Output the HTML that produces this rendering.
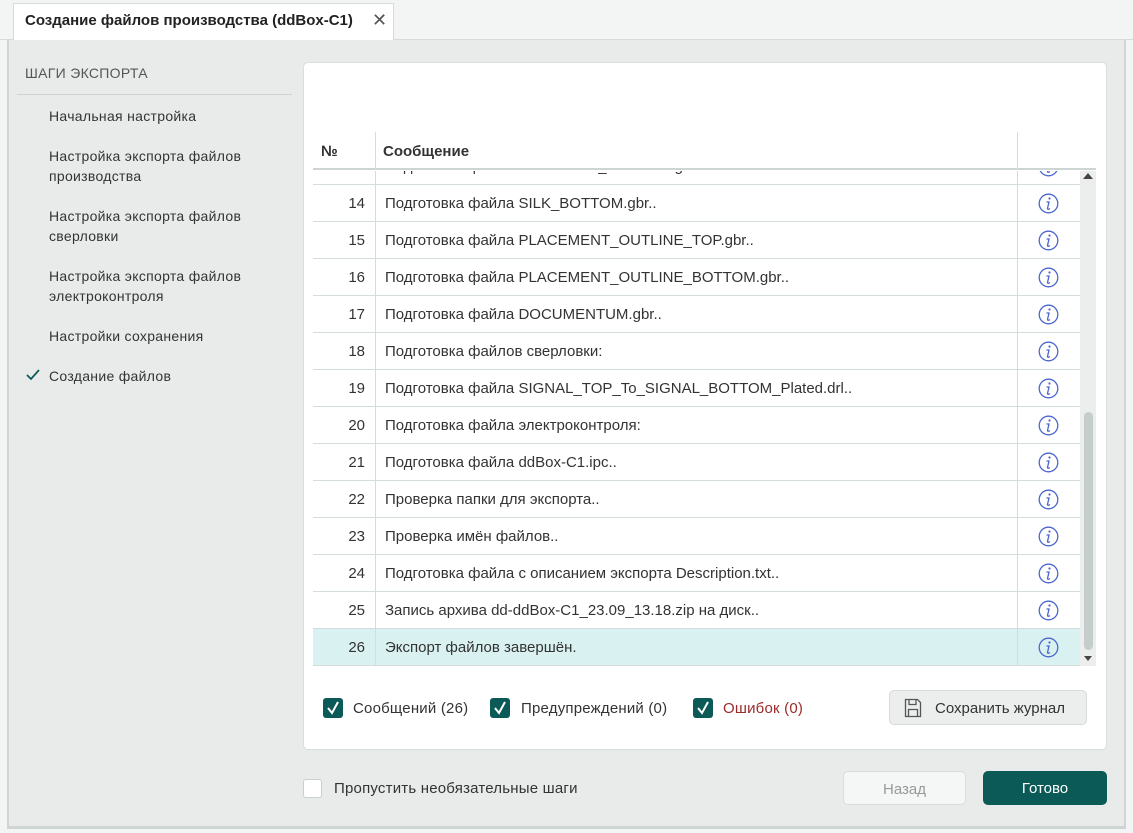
<!DOCTYPE html>
<html><head><meta charset="utf-8"><style>
*{box-sizing:border-box;margin:0;padding:0}
body{width:1133px;height:833px;background:#f3f4f4;font-family:"Liberation Sans",sans-serif;position:relative;overflow:hidden;color:#222}
.abs{position:absolute}
.tabbar{left:0;top:0;width:1133px;height:40px;background:#f3f4f4;border-bottom:1px solid #d5dada}
.tab{left:13px;top:3px;width:381px;height:38px;background:#fff;border:1px solid #d5dada;border-bottom:none;font-weight:bold;font-size:15px;padding:8px 0 0 11px;color:#222}
.main{left:7px;top:40px;width:1119px;height:789px;background:#e9ebea;border-left:2px solid #cfd5d5;border-right:2px solid #cfd5d5;border-bottom:3px solid #cfd5d5}
.step{left:49px;font-size:14px;letter-spacing:0.3px;color:#333;line-height:20px}
.card{left:303px;top:62px;width:804px;height:688px;background:#fff;border:1px solid #d8dddd;border-radius:5px}
.cb{width:20px;height:20px;background:#0b5a57;border-radius:3px}
.lbl{font-size:15px;letter-spacing:0.2px;color:#333}
</style></head><body>
<div class="abs tabbar"></div>
<div class="abs tab">Создание файлов производства (ddBox-C1)<span style="position:absolute;left:358px;top:6px;font-weight:normal;font-size:18px;color:#555">✕</span></div>
<div class="abs main"></div>
<div class="abs" style="left:25px;top:65px;font-size:14px;letter-spacing:0.3px;color:#555">ШАГИ ЭКСПОРТА</div>
<div class="abs" style="left:17px;top:94px;width:275px;height:1px;background:#cdd3d3"></div>
<div class="abs step" style="top:106px">Начальная настройка</div>
<div class="abs step" style="top:146px">Настройка экспорта файлов<br>производства</div>
<div class="abs step" style="top:206px">Настройка экспорта файлов<br>сверловки</div>
<div class="abs step" style="top:266px">Настройка экспорта файлов<br>электроконтроля</div>
<div class="abs step" style="top:326px">Настройки сохранения</div>
<div class="abs step" style="top:366px">Создание файлов</div>
<svg class="abs" style="left:26px;top:369px" width="14" height="12"><path d="M1 6l4 4 8-9" fill="none" stroke="#0b5a57" stroke-width="1.8"/></svg>
<div class="abs card"></div>
<div class="abs" style="left:313px;top:132px;width:783px;height:38px;border-bottom:2px solid #cdd4d4;font-size:15px;font-weight:bold;color:#333">
<span style="position:absolute;left:8px;top:11px">№</span>
<div style="position:absolute;left:62px;top:0;height:38px;border-left:1px solid #d5dcdc"></div>
<span style="position:absolute;left:70px;top:11px">Сообщение</span>
<div style="position:absolute;left:704px;top:0;height:38px;border-left:1px solid #d5dcdc"></div>
</div>
<div class="abs" style="left:313px;top:171px;width:783px;height:495px;overflow:hidden">
<div style="position:relative;top:-23px">
<!--ROWS-->
</div></div>
<div class="abs" style="left:1080px;top:171px;width:16px;height:495px;background:#eceeed"></div>
<div class="abs" style="left:1084px;top:412px;width:9px;height:238px;background:#c4cccc;border-radius:5px"></div>
<div class="abs" style="left:1083px;top:173px;width:0;height:0;border-left:5px solid transparent;border-right:5px solid transparent;border-bottom:6px solid #444"></div>
<div class="abs" style="left:1084px;top:656px;width:0;height:0;border-left:4px solid transparent;border-right:4px solid transparent;border-top:5px solid #444"></div>
<div class="abs cb" style="left:323px;top:698px"></div>
<div class="abs cb" style="left:490px;top:698px"></div>
<div class="abs cb" style="left:693px;top:698px"></div>
<svg class="abs" style="left:323px;top:698px" width="20" height="20"><path d="M5 10l4 5 6-11" fill="none" stroke="#fff" stroke-width="2"/></svg>
<svg class="abs" style="left:490px;top:698px" width="20" height="20"><path d="M5 10l4 5 6-11" fill="none" stroke="#fff" stroke-width="2"/></svg>
<svg class="abs" style="left:693px;top:698px" width="20" height="20"><path d="M5 10l4 5 6-11" fill="none" stroke="#fff" stroke-width="2"/></svg>
<div class="abs lbl" style="left:353px;top:700px">Сообщений (26)</div>
<div class="abs lbl" style="left:521px;top:700px">Предупреждений (0)</div>
<div class="abs lbl" style="left:723px;top:700px;color:#9b2a2a">Ошибок (0)</div>
<div class="abs" style="left:889px;top:690px;width:198px;height:35px;background:#eceeed;border:1px solid #d5dada;border-radius:5px;font-size:15px;color:#333;padding:9px 0 0 45px">Сохранить журнал</div>
<svg class="abs" style="left:904px;top:698px" width="18" height="20"><path d="M1.5 1.5h12l3 3v14h-15z M5 1.5v5h7v-5 M4.5 18.5v-7h9v7" fill="none" stroke="#555" stroke-width="1.3"/></svg>
<div class="abs" style="left:303px;top:779px;width:19px;height:19px;background:#fff;border:1px solid #c8cfcf;border-radius:3px"></div>
<div class="abs lbl" style="left:334px;top:780px">Пропустить необязательные шаги</div>
<div class="abs" style="left:843px;top:771px;width:123px;height:34px;background:#f5f6f6;border:1px solid #d8dddd;border-radius:5px;font-size:15px;color:#999;text-align:center;padding-top:9px">Назад</div>
<div class="abs" style="left:983px;top:771px;width:124px;height:34px;background:#0b5a57;border-radius:5px;font-size:15px;color:#fff;text-align:center;padding-top:9px">Готово</div>
<script>
var r=[[13,"Подготовка файла ASSEMBLY_BOTTOM.gbr.."],[14,"Подготовка файла SILK_BOTTOM.gbr.."],[15,"Подготовка файла PLACEMENT_OUTLINE_TOP.gbr.."],[16,"Подготовка файла PLACEMENT_OUTLINE_BOTTOM.gbr.."],[17,"Подготовка файла DOCUMENTUM.gbr.."],[18,"Подготовка файлов сверловки:"],[19,"Подготовка файла SIGNAL_TOP_To_SIGNAL_BOTTOM_Plated.drl.."],[20,"Подготовка файла электроконтроля:"],[21,"Подготовка файла ddBox-C1.ipc.."],[22,"Проверка папки для экспорта.."],[23,"Проверка имён файлов.."],[24,"Подготовка файла с описанием экспорта Description.txt.."],[25,"Запись архива dd-ddBox-C1_23.09_13.18.zip на диск.."],[26,"Экспорт файлов завершён."]];
var h="";r.forEach(function(x,i){h+='<div style="position:relative;height:37px;border-bottom:1px solid #d5dcdc;font-size:15px;color:#333;width:767px;'+(x[0]==26?'background:#d9f1f1':'')+'"><span style="position:absolute;left:0;width:52px;text-align:right;top:10px">'+x[0]+'</span><div style="position:absolute;left:62px;top:0;height:36px;border-left:1px solid #d5dcdc"></div><span style="position:absolute;left:72px;top:10px;white-space:nowrap">'+x[1]+'</span><div style="position:absolute;left:704px;top:0;height:36px;border-left:1px solid #d5dcdc"></div><svg style="position:absolute;left:725px;top:8px" width="21" height="21"><circle cx="10.5" cy="10.5" r="9.3" fill="none" stroke="#4a66d0" stroke-width="1.3"/><circle cx="11.5" cy="5.5" r="1.1" fill="#4a66d0"/><path d="M8.5 9h2.5l-1.5 6.5c0 1 1.3 1 2.3 0" fill="none" stroke="#4a66d0" stroke-width="1.3"/></svg></div>';});
document.body.innerHTML=document.body.innerHTML.replace("<!--ROWS-->",h);
</script>
</body></html>
